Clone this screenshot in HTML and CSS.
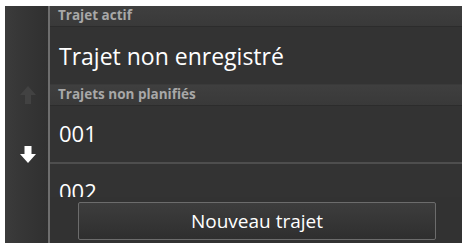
FILE: index.html
```html
<!DOCTYPE html>
<html lang="fr">
<head>
<meta charset="utf-8">
<link rel="stylesheet" href="styles.css">
</head>
<body>
<div class="screen">
  <aside class="side">
    <svg class="arrow up" width="16" height="18" viewBox="0 0 16 18"><path d="M8 0 L16 9 L11 9 L11 18 L5 18 L5 9 L0 9 Z" fill="#424242"/></svg>
    <svg class="arrow down" width="16" height="17" viewBox="0 0 16 17"><path d="M8 17 L16 8 L11.5 8 L11.5 0 L4.5 0 L4.5 8 L0 8 Z" fill="#fff"/></svg>
  </aside>
  <main class="main">
    <div class="list">
      <div class="head">Trajet actif</div>
      <div class="row big">Trajet non enregistré</div>
      <div class="head">Trajets non planifiés</div>
      <div class="row">001</div>
      <div class="row">002</div>
    </div>
    <div class="foot">
      <button class="btn">Nouveau trajet</button>
    </div>
  </main>
</div>
</body>
</html>
```
FILE: styles.css
```css
html, body { margin: 0; padding: 0; background: #fff; }
body { padding: 6px 0 0 5px; }
.screen {
  width: 457px; height: 237px; display: flex; background: #333;
  font-family: "Open Sans", "Noto Sans", sans-serif; overflow: hidden;
}
.side {
  width: 43px; flex: none;
  background: linear-gradient(90deg, #3b3b3b 0%, #353535 50%, #303030 100%);
  border-right: 2px solid #6e6e6e;
  display: flex; flex-direction: column; align-items: center;
}
.arrow.up { margin-top: 80px; margin-left: 2px; }
.arrow.down { margin-top: 42px; margin-left: 2px; }
.main { flex: 1; display: flex; flex-direction: column; background: #333; }
.list { flex: 1; overflow: hidden; }
.head {
  height: 20px; line-height: 19px; padding-left: 8px;
  background: linear-gradient(180deg, #3f3f3f, #393939);
  color: #a8a8a8; font-weight: 700; font-size: 13.5px;
  border-bottom: 1px solid #2c2c2c;
}
.row {
  height: 56px; line-height: 54px; padding-left: 9px; color: #fff; font-size: 22px;
  border-bottom: 2px solid #4e4e4e;
}
.row.big { font-size: 23px; height: 57px; line-height: 58px; border-bottom: 1px solid #3a3a3a; }
.foot {
  height: 46px; flex: none; background: #323232;
  display: flex; justify-content: center;
}
.btn {
  width: 358px; height: 38px; margin-top: 5px; margin-left: 2px;
  background: linear-gradient(180deg, #3d3d3d, #2f2f2f);
  border: 1px solid #6c6c6c; border-radius: 2px; color: #fff;
  font-family: "Open Sans", "Noto Sans", sans-serif; font-size: 19px;
}
```
